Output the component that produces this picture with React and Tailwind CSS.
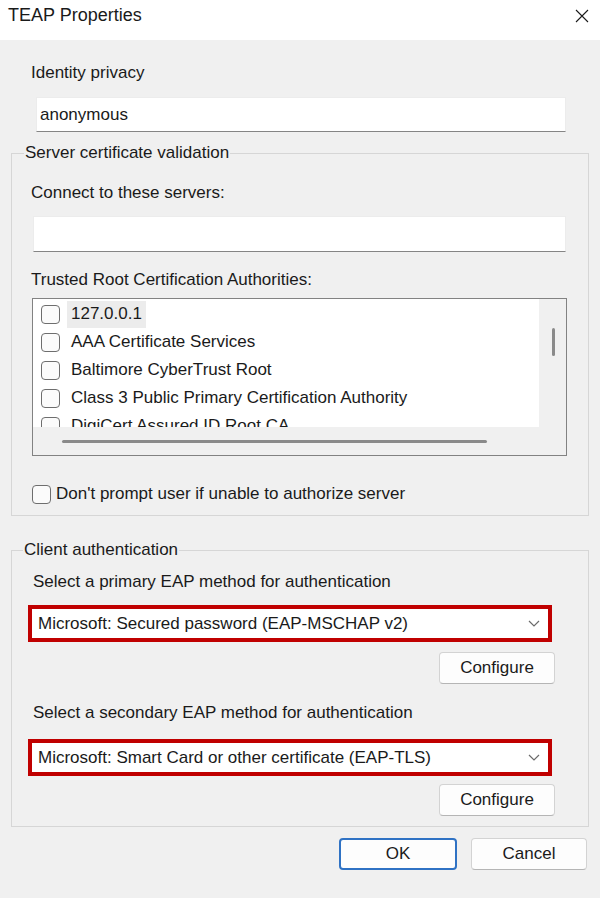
import { useState } from 'react';

const authorities = [
  '127.0.0.1',
  'AAA Certificate Services',
  'Baltimore CyberTrust Root',
  'Class 3 Public Primary Certification Authority',
  'DigiCert Assured ID Root CA',
];

function CloseIcon() {
  return (
    <svg width="14" height="14" viewBox="0 0 14 14" fill="none">
      <path d="M1 1L13 13M13 1L1 13" stroke="#1a1a1a" strokeWidth="1.1" />
    </svg>
  );
}

function Chevron() {
  return (
    <svg width="12" height="7" viewBox="0 0 12 7" fill="none">
      <path d="M1 1L6 6L11 1" stroke="#6b6b6b" strokeWidth="1.2" />
    </svg>
  );
}

function Checkbox({ checked, onChange }) {
  return (
    <button
      onClick={onChange}
      className={`w-[19px] h-[19px] shrink-0 rounded-[4px] border border-[#6e6e6e] ${checked ? 'bg-[#005fb8]' : 'bg-[#fbfbfb]'}`}
    />
  );
}

function MethodSelect({ value }) {
  return (
    <div className="ml-[16px] w-[524px] h-[37px] border-4 border-[#c00000] bg-white flex items-center justify-between pl-[6px] pr-[8px]">
      <span className="leading-[20px]">{value}</span>
      <Chevron />
    </div>
  );
}

function Button({ children, primary }) {
  return (
    <button
      className={`h-[32px] rounded-[4px] bg-[#fdfdfd] leading-[20px] ${primary ? 'w-[118px] border-2 border-[#2f72c4]' : 'w-[116px] border border-[#d3d3d3] border-b-[#b5b5b5]'}`}
    >
      {children}
    </button>
  );
}

export default function App() {
  const [checked, setChecked] = useState({});
  const [noPrompt, setNoPrompt] = useState(false);

  return (
    <div className="w-[600px] h-[898px] bg-[#f0f0f0] text-[17px] text-[#1a1a1a] overflow-hidden" style={{ fontFamily: '"Liberation Sans", Arial, sans-serif' }}>
      {/* title bar */}
      <div className="h-[40px] bg-white flex items-start justify-between pl-[8px] pr-[11px] pt-[4px]">
        <span className="text-[18px] leading-[22px]">TEAP Properties</span>
        <span className="mt-[5px]"><CloseIcon /></span>
      </div>

      <div className="ml-[31px] mt-[23px] leading-[20px]">Identity privacy</div>
      <div className="ml-[36px] mt-[14px] w-[530px] h-[35px] bg-white border border-[#ececec] border-b-[#858585] flex items-center pl-[3px]">
        anonymous
      </div>

      {/* server certificate validation */}
      <fieldset className="ml-[11px] mt-[11px] w-[578px] border border-[#d6d6d6] pb-[11px]">
        <legend className="ml-[12px] px-[1px] leading-[20px]">Server certificate validation</legend>
        <div className="ml-[19px] mt-[20px] leading-[20px]">Connect to these servers:</div>
        <div className="ml-[21px] mt-[13px] w-[533px] h-[36px] bg-white border border-[#ececec] border-b-[#858585]" />
        <div className="ml-[19px] mt-[18px] leading-[20px]">Trusted Root Certification Authorities:</div>

        <div className="ml-[20px] mt-[8px] w-[535px] h-[158px] border border-[#828282] grid grid-cols-[506px_1fr] grid-rows-[128px_1fr]">
          <div className="bg-white overflow-hidden pt-[1px]">
            {authorities.map((name, i) => (
              <div key={name} className="h-[28px] flex items-center pl-[8px] gap-[7px]">
                <Checkbox checked={!!checked[name]} onChange={() => setChecked({ ...checked, [name]: !checked[name] })} />
                <span className={`h-[27px] flex items-center px-[4px] whitespace-nowrap ${i === 0 ? 'bg-[#ececec]' : ''}`}>{name}</span>
              </div>
            ))}
          </div>
          <div className="flex justify-center pt-[29px] pl-[1px]">
            <div className="w-[3px] h-[28px] rounded-full bg-[#8a8a8a]" />
          </div>
          <div className="flex items-center pl-[29px]">
            <div className="w-[425px] h-[3px] rounded-full bg-[#8a8a8a]" />
          </div>
          <div />
        </div>

        <div className="ml-[20px] mt-[28px] flex items-center gap-[5px]">
          <Checkbox checked={noPrompt} onChange={() => setNoPrompt(!noPrompt)} />
          <span className="leading-[20px]">Don't prompt user if unable to authorize server</span>
        </div>
      </fieldset>

      {/* client authentication */}
      <fieldset className="ml-[11px] mt-[24px] w-[578px] border border-[#d6d6d6] pb-[10px]">
        <legend className="ml-[11px] px-[1px] leading-[20px]">Client authentication</legend>
        <div className="ml-[21px] mt-[12px] leading-[20px]">Select a primary EAP method for authentication</div>
        <div className="mt-[13px]">
          <MethodSelect value="Microsoft: Secured password (EAP-MSCHAP v2)" />
        </div>
        <div className="mt-[10px] flex justify-end pr-[33px]">
          <Button>Configure</Button>
        </div>
        <div className="ml-[21px] mt-[19px] leading-[20px]">Select a secondary EAP method for authentication</div>
        <div className="mt-[16px]">
          <MethodSelect value="Microsoft: Smart Card or other certificate (EAP-TLS)" />
        </div>
        <div className="mt-[8px] flex justify-end pr-[33px]">
          <Button>Configure</Button>
        </div>
      </fieldset>

      <div className="mt-[11px] flex justify-end gap-[14px] pr-[13px]">
        <Button primary>OK</Button>
        <Button>Cancel</Button>
      </div>
    </div>
  );
}
